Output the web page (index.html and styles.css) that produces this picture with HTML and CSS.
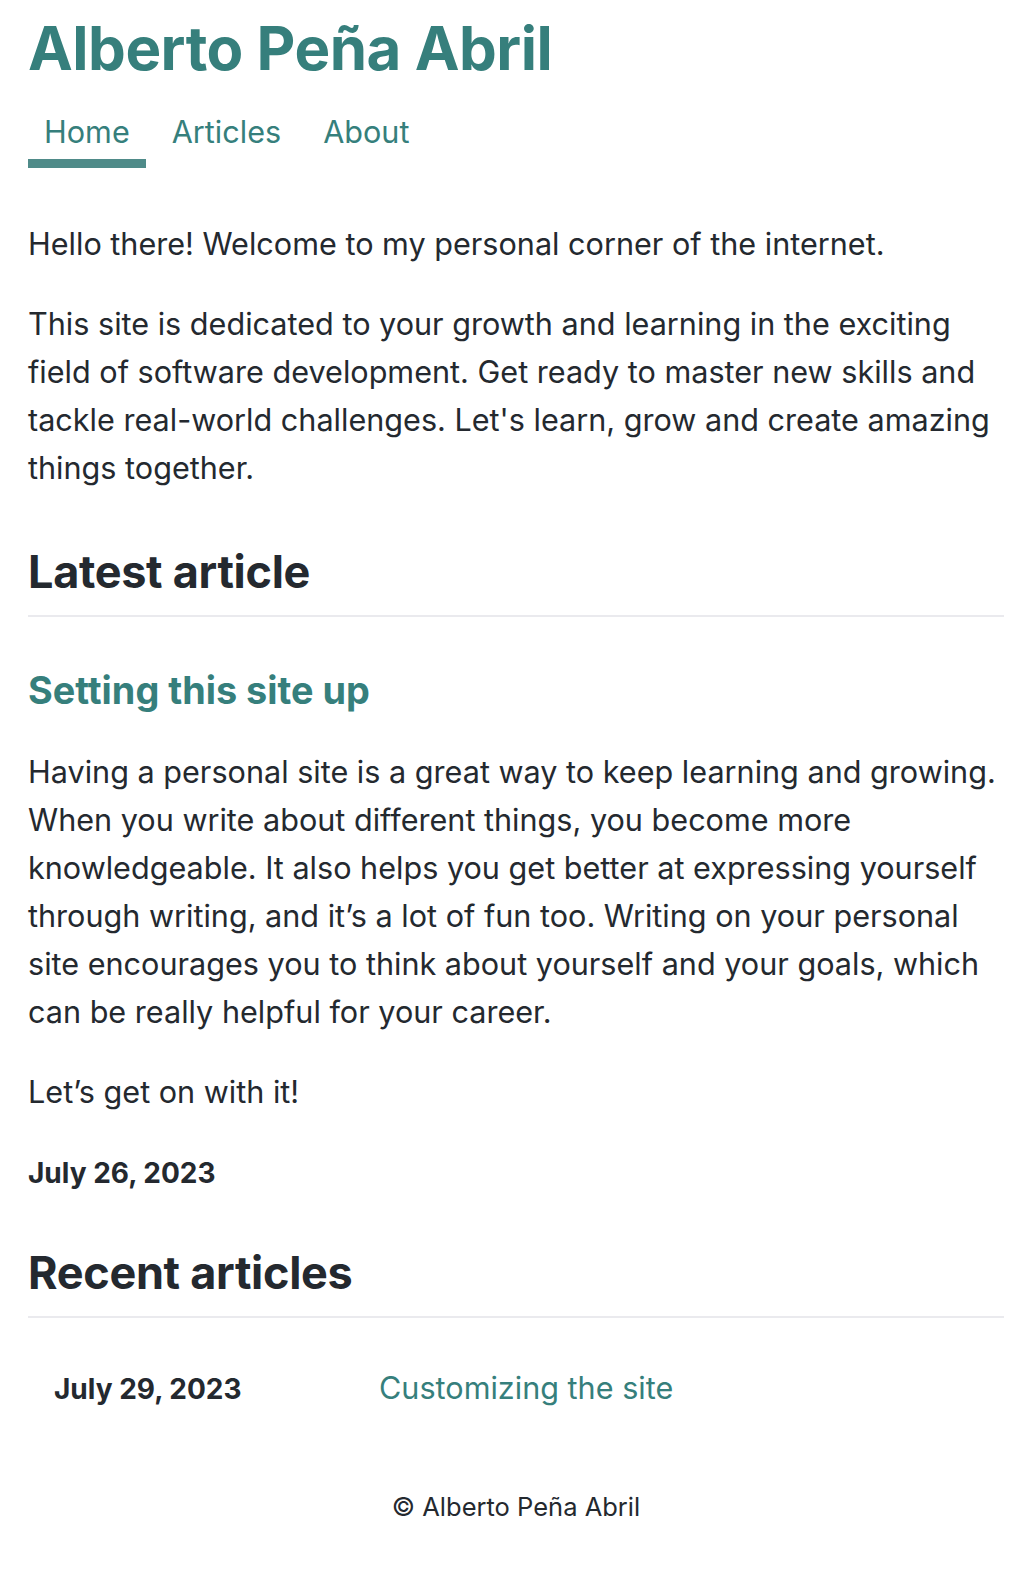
FILE: index.html
```html
<!DOCTYPE html>
<html lang="en">
<head>
<meta charset="utf-8">
<title>Alberto Peña Abril</title>
<link rel="stylesheet" href="styles.css">
</head>
<body>
<div class="page">
  <header class="site-header">
    <h1 class="site-title"><a href="#">Alberto Peña Abril</a></h1>
    <nav class="nav">
      <a class="nav-item active" href="#">Home</a>
      <a class="nav-item" href="#">Articles</a>
      <a class="nav-item" href="#">About</a>
    </nav>
  </header>
  <main class="content">
    <p>Hello there! Welcome to my personal corner of the internet.</p>
    <p>This site is dedicated to your growth and learning in the exciting field of software development. Get ready to master new skills and tackle real-world challenges. Let's learn, grow and create amazing things together.</p>

    <h2 class="section-title">Latest article</h2>
    <article class="latest">
      <h3 class="article-title"><a href="#">Setting this site up</a></h3>
      <p>Having a personal site is a great way to keep learning and growing. When you write about different things, you become more knowledgeable. It also helps you get better at expressing yourself through writing, and it’s a lot of fun too. Writing on your personal site encourages you to think about yourself and your goals, which can be really helpful for your career.</p>
      <p>Let’s get on with it!</p>
      <div class="date">July 26, 2023</div>
    </article>

    <h2 class="section-title">Recent articles</h2>
    <div class="recent">
      <div class="recent-row">
        <span class="recent-date">July 29, 2023</span>
        <a class="recent-link" href="#">Customizing the site</a>
      </div>
    </div>
  </main>
  <footer class="footer">© Alberto Peña Abril</footer>
</div>
</body>
</html>
```
FILE: styles.css
```css
* { box-sizing: border-box; }
html, body { margin: 0; padding: 0; background: #ffffff; }
body {
  font-family: Inter, "Noto Sans", "Liberation Sans", sans-serif;
  color: #24292f;
  font-size: 30.6px;
  line-height: 48px;
}
a { color: #367f7c; text-decoration: none; }
.page { padding: 10px 28px 0; }

.site-title {
  margin: 0;
  font-size: 60px;
  line-height: 76px;
  font-weight: 700;
  letter-spacing: -0.5px;
}
.nav {
  display: flex;
  gap: 10px;
  margin-top: 26px;
}
.nav-item {
  display: block;
  padding: 0 16px;
  font-size: 30.6px;
  line-height: 40px;
  border-bottom: 9px solid transparent;
  padding-bottom: 7px;
}
.nav-item.active { border-bottom-color: #4f8b89; }

.content { padding-top: 52px; }
.content p { margin: 0 0 32px; }

.section-title {
  margin: 50px 0 0;
  font-size: 45px;
  line-height: 60px;
  font-weight: 700;
  padding-bottom: 13px;
  border-bottom: 2px solid #eaeaee;
  letter-spacing: -0.3px;
}
.article-title {
  margin: 49px 0 34px;
  font-size: 37.8px;
  line-height: 48px;
  font-weight: 700;
}
.date {
  font-size: 28px;
  font-weight: 700;
  line-height: 40px;
  margin-top: 37px;
}
.latest { margin-bottom: 50px; }
.recent { padding: 46px 26px 0; }
.recent-row {
  display: grid;
  grid-template-columns: 325px 1fr;
  align-items: baseline;
}
.recent-date { font-size: 28px; font-weight: 700; }
.recent-link { font-size: 30.6px; }
.footer {
  text-align: center;
  font-size: 25.5px;
  padding: 70px 0 40px;
}
```
